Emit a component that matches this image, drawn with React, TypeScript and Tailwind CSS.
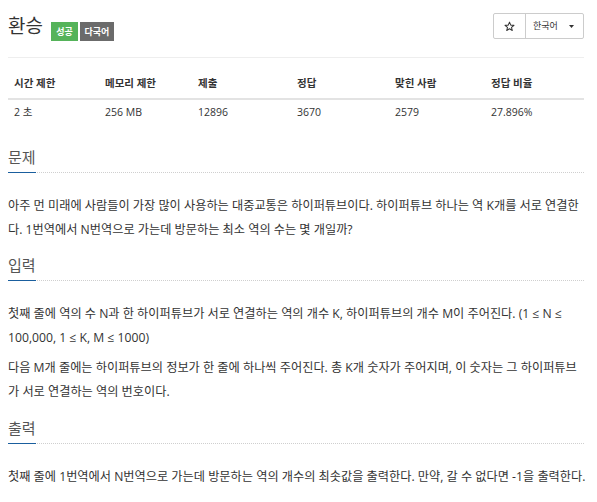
import * as React from "react";

type Stat = { label: string; value: string; width: string };

const stats: Stat[] = [
  { label: "시간 제한", value: "2 초", width: "w-[91px]" },
  { label: "메모리 제한", value: "256 MB", width: "w-[93px]" },
  { label: "제출", value: "12896", width: "w-[99px]" },
  { label: "정답", value: "3670", width: "w-[98px]" },
  { label: "맞힌 사람", value: "2579", width: "w-[96px]" },
  { label: "정답 비율", value: "27.896%", width: "w-[99px]" },
];

function StarIcon() {
  return (
    <svg width="11" height="11" viewBox="0 0 24 24" fill="none">
      <polygon
        points="12,2.5 14.8,9 21.8,9.4 16.4,13.9 18.1,20.8 12,17 5.9,20.8 7.6,13.9 2.2,9.4 9.2,9"
        stroke="#333"
        strokeWidth="2.2"
        strokeLinejoin="round"
      />
    </svg>
  );
}

function Headline({ title, className = "" }: { title: string; className?: string }) {
  return (
    <div className={`border-b border-dotted border-[#cfcfcf] ${className}`}>
      <span className="inline-block mb-[-1px] pb-[3px] border-b border-[#1a5f9e] text-[15px] leading-[24px] text-[#555]">
        {title}
      </span>
    </div>
  );
}

export default function App() {
  return (
    <div
      className="min-h-screen bg-white text-[#333]"
      style={{ fontFamily: '"Open Sans", "Noto Sans CJK KR", sans-serif' }}
    >
      <div className="ml-2 w-[576px]">
        {/* page header */}
        <div className="flex h-[58px] justify-between border-b border-[#eee]">
          <div className="flex items-start pt-[14px]">
            <h1 className="text-[19px] leading-[24px] text-[#333]">환승</h1>
            <span className="ml-[8px] mt-[8px] flex h-[19px] w-[27px] items-center justify-center bg-[#55b35a] text-[9px] font-bold text-white">
              성공
            </span>
            <span className="ml-[2px] mt-[8px] flex h-[19px] w-[34px] items-center justify-center bg-[#6b6b6b] text-[9px] font-bold text-white">
              다국어
            </span>
          </div>
          <div className="pt-[13px]">
            <div className="flex h-[26px] rounded-[2px] border border-[#ccc]">
              <div className="flex w-[32px] items-center justify-center border-r border-[#ccc]">
                <StarIcon />
              </div>
              <div className="flex w-[57px] items-center pl-[7px] text-[9px] text-[#333]">
                한국어
                <svg className="ml-[11px]" width="5" height="3" viewBox="0 0 5 3">
                  <polygon points="0,0 5,0 2.5,3" fill="#333" />
                </svg>
              </div>
            </div>
          </div>
        </div>

        {/* stats table */}
        <div className="mt-[11px]">
          <div className="flex h-[31px] items-center border-b-2 border-[#e3e3e3]">
            {stats.map((s) => (
              <div key={s.label} className={`${s.width} pl-[6px] text-[10.5px] font-bold text-[#333]`}>
                {s.label}
              </div>
            ))}
          </div>
          <div className="flex h-[26px] items-center">
            {stats.map((s) => (
              <div key={s.label} className={`${s.width} pl-[6px] text-[10.5px] text-[#333]`}>
                {s.value}
              </div>
            ))}
          </div>
        </div>

        {/* problem */}
        <Headline title="문제" className="mt-[19px]" />
        <div className="mt-[21px] text-[12.2px] leading-[24px] text-[#333] whitespace-nowrap">
          <p>
            아주 먼 미래에 사람들이 가장 많이 사용하는 대중교통은 하이퍼튜브이다. 하이퍼튜브 하나는 역 K개를 서로 연결한
            <br />
            다. 1번역에서 N번역으로 가는데 방문하는 최소 역의 수는 몇 개일까?
          </p>
        </div>

        {/* input */}
        <Headline title="입력" className="mt-[11px]" />
        <div className="mt-[21px] flex flex-col gap-[6px] text-[12.2px] leading-[24px] text-[#333] whitespace-nowrap">
          <p>
            첫째 줄에 역의 수 N과 한 하이퍼튜브가 서로 연결하는 역의 개수 K, 하이퍼튜브의 개수 M이 주어진다. (1 ≤ N ≤
            <br />
            100,000, 1 ≤ K, M ≤ 1000)
          </p>
          <p>
            다음 M개 줄에는 하이퍼튜브의 정보가 한 줄에 하나씩 주어진다. 총 K개 숫자가 주어지며, 이 숫자는 그 하이퍼튜브
            <br />
            가 서로 연결하는 역의 번호이다.
          </p>
        </div>

        {/* output */}
        <Headline title="출력" className="mt-[12px]" />
        <div className="mt-[21px] text-[12.2px] leading-[24px] text-[#333] whitespace-nowrap">
          <p>
            첫째 줄에 1번역에서 N번역으로 가는데 방문하는 역의 개수의 최솟값을 출력한다. 만약, 갈 수 없다면 -1을 출력한다.
          </p>
        </div>
      </div>
    </div>
  );
}
